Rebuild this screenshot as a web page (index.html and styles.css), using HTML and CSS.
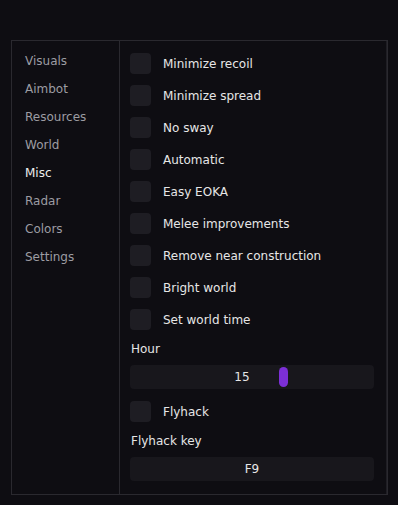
FILE: index.html
```html
<!DOCTYPE html>
<html>
<head>
<meta charset="utf-8">
<link rel="stylesheet" href="styles.css">
</head>
<body>
<div class="window">
  <div class="inner">
    <nav class="sidebar">
      <div class="nav-item">Visuals</div>
      <div class="nav-item">Aimbot</div>
      <div class="nav-item">Resources</div>
      <div class="nav-item">World</div>
      <div class="nav-item active">Misc</div>
      <div class="nav-item">Radar</div>
      <div class="nav-item">Colors</div>
      <div class="nav-item">Settings</div>
    </nav>
    <main class="content">
      <div class="check-row"><span class="box"></span><span class="label">Minimize recoil</span></div>
      <div class="check-row"><span class="box"></span><span class="label">Minimize spread</span></div>
      <div class="check-row"><span class="box"></span><span class="label">No sway</span></div>
      <div class="check-row"><span class="box"></span><span class="label">Automatic</span></div>
      <div class="check-row"><span class="box"></span><span class="label">Easy EOKA</span></div>
      <div class="check-row"><span class="box"></span><span class="label">Melee improvements</span></div>
      <div class="check-row"><span class="box"></span><span class="label">Remove near construction</span></div>
      <div class="check-row"><span class="box"></span><span class="label">Bright world</span></div>
      <div class="check-row"><span class="box"></span><span class="label">Set world time</span></div>
      <div class="field-label">Hour</div>
      <div class="slider">
        <span class="slider-value">15</span>
        <span class="grab"></span>
      </div>
      <div class="check-row flyhack"><span class="box"></span><span class="label">Flyhack</span></div>
      <div class="field-label">Flyhack key</div>
      <div class="keybox">F9</div>
    </main>
  </div>
</div>
</body>
</html>
```

FILE: styles.css
```css
html, body {
  margin: 0;
  padding: 0;
  background: #0e0d12;
}
body {
  width: 398px;
  height: 505px;
  font-family: "DejaVu Sans", sans-serif;
  font-size: 12px;
  color: #e6e6e6;
  padding-top: 40px;
  padding-left: 11px;
  box-sizing: border-box;
}
.window {
  width: 377px;
  height: 455px;
  box-sizing: border-box;
  border: 1px solid #2a292f;
  background: #0e0d12;
}
.inner {
  display: flex;
  height: 100%;
  box-sizing: border-box;
  border-right: 1px solid #1f1e24;
}
.sidebar {
  width: 108px;
  border-right: 1px solid #2a292f;
  padding-top: 13px;
  padding-left: 13px;
  box-sizing: border-box;
  display: flex;
  flex-direction: column;
  gap: 14px;
}
.nav-item {
  height: 14px;
  line-height: 14px;
  color: #9c9ca2;
}
.nav-item.active {
  color: #ececec;
}
.content {
  flex: 1;
  padding: 12px 10px 0 10px;
  display: flex;
  flex-direction: column;
}
.check-row {
  display: flex;
  align-items: center;
  height: 21px;
  margin-bottom: 11px;
}
.box {
  width: 21px;
  height: 21px;
  border-radius: 4px;
  background: #1e1d23;
  flex: none;
}
.label {
  margin-left: 12px;
  color: #e6e6e6;
}
.field-label {
  height: 14px;
  line-height: 14px;
  margin-top: 1px;
  padding-left: 1px;
  margin-bottom: 9px;
}
.slider {
  position: relative;
  height: 24px;
  width: 244px;
  border-radius: 4px;
  background: #18171c;
  display: flex;
  align-items: center;
  justify-content: center;
  margin-bottom: 12px;
}
.slider-value {
  color: #e6e6e6;
  margin-left: -20px;
}
.grab {
  position: absolute;
  left: 149px;
  top: 2px;
  width: 9px;
  height: 20px;
  border-radius: 5px;
  background: #7c2fd6;
}
.flyhack {
  margin-bottom: 11px;
}
.keybox {
  height: 24px;
  width: 244px;
  border-radius: 4px;
  background: #18171c;
  display: flex;
  align-items: center;
  justify-content: center;
}
```
